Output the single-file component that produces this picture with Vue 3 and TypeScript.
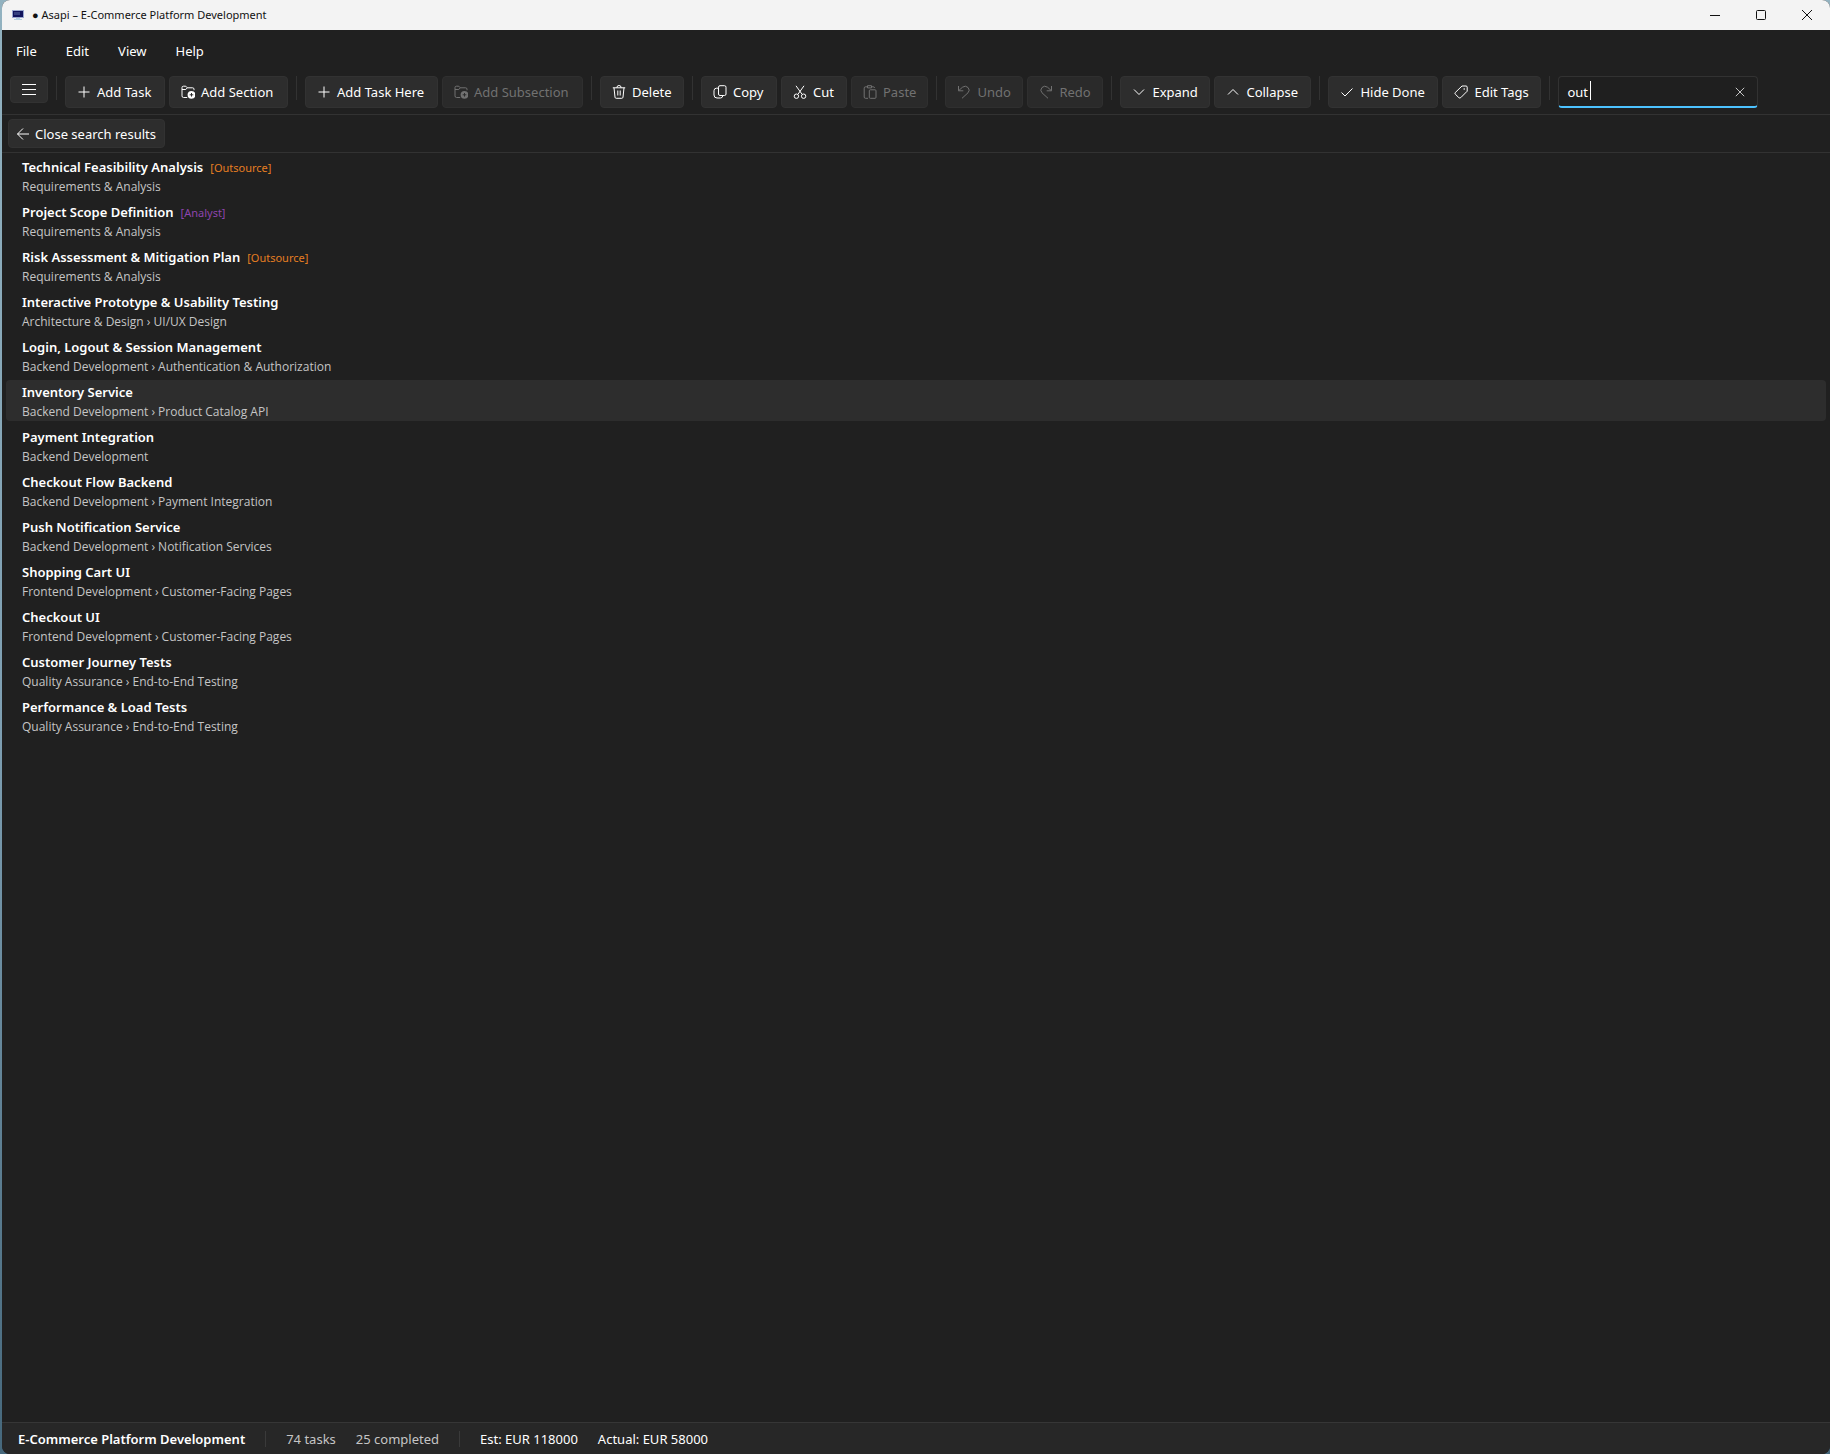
<script setup lang="ts">
import { computed, nextTick, onMounted, ref } from 'vue'

interface Tool { label: string; icon: string; width: number; disabled?: boolean }
interface Result { title: string; path: string; tag?: string; tone?: string }

const icons: Record<string, string> = {
  plus: 'M7 1.5v11M1.5 7h11',
  folder: 'M6.2 12.5H2.6A1.6 1.6 0 0 1 1 10.900V2.600A1.400 1.400 0 0 1 2.400 1.200H4.800L6.300 2.800H11.600A1.400 1.400 0 0 1 13 4.200V5.200M1 4.500H4.800L6.300 2.800',
  trash: 'M.8 2.800H13.200M5 2.800V2.200A2 1.700 0 0 1 9 2.200V2.800M2 2.800L3 12.200Q3.100 13.300 4.200 13.300H9.800Q10.900 13.300 11 12.200L12 2.800M5.800 5.500V10.500M8.200 5.500V10.500',
  copy: 'M5.500 2.200A1.500 1.500 0 0 1 7 .7H11.500A1.500 1.500 0 0 1 13 2.200V9A1.500 1.500 0 0 1 11.500 10.500H7A1.500 1.500 0 0 1 5.500 9ZM5.500 3.200H3.500Q1 3.200 1 5.700V10Q1 13 4 13H7.500Q9.500 13 9.800 10.800',
  cut: 'M3 .8L9 9.200M11 .8L5 9.200M5.600 11.200a2.200 2.200 0 1 1-4.400 0a2.200 2.200 0 1 1 4.400 0M12.800 11.200a2.200 2.200 0 1 1-4.400 0a2.200 2.200 0 1 1 4.400 0',
  paste: 'M4 1.800H2.500A1.300 1.300 0 0 0 1.200 3.100V12A1.300 1.300 0 0 0 2.500 13.300H5M4.500 .7H8.500V2.900H4.500ZM9 1.800H10.300Q11.500 1.800 11.500 3M6.300 5.800A1 1 0 0 1 7.300 4.800H12A1 1 0 0 1 13 5.800V12.300A1 1 0 0 1 12 13.300H7.300A1 1 0 0 1 6.300 12.300Z',
  undo: 'M1.500 1V5.800H6.300M1.800 5.500L5.500 2.200Q8.500 0 11 2.500Q13.500 5.200 11 7.800L5 13.300',
  redo: 'M12.500 1V5.800H7.700M12.200 5.500L8.500 2.200Q5.500 0 3 2.500Q.5 5.200 3 7.800L9 13.300',
  down: 'M2 4.500L7 9.500L12 4.500',
  up: 'M2 9.500L7 4.500L12 9.500',
  check: 'M1.500 7.500L5 11L12.500 3.500',
  tag: 'M8 1H12Q13.200 1 13.200 2.200V6.200L6.800 12.600Q5.800 13.500 4.800 12.600L1.300 9.200Q.5 8.300 1.300 7.500ZM10.200 3.500v1M9.700 4h1',
}

const groups: Tool[][] = [
  [{ label: 'Add Task', icon: 'plus', width: 100 }, { label: 'Add Section', icon: 'folder', width: 119 }],
  [{ label: 'Add Task Here', icon: 'plus', width: 133 }, { label: 'Add Subsection', icon: 'folder', width: 141, disabled: true }],
  [{ label: 'Delete', icon: 'trash', width: 84 }],
  [
    { label: 'Copy', icon: 'copy', width: 76 },
    { label: 'Cut', icon: 'cut', width: 66 },
    { label: 'Paste', icon: 'paste', width: 77, disabled: true },
  ],
  [{ label: 'Undo', icon: 'undo', width: 78, disabled: true }, { label: 'Redo', icon: 'redo', width: 76, disabled: true }],
  [{ label: 'Expand', icon: 'down', width: 90 }, { label: 'Collapse', icon: 'up', width: 97 }],
  [{ label: 'Hide Done', icon: 'check', width: 110 }, { label: 'Edit Tags', icon: 'tag', width: 99 }],
]

const results: Result[] = [
  { title: 'Technical Feasibility Analysis', path: 'Requirements & Analysis', tag: '[Outsource]', tone: 'orange' },
  { title: 'Project Scope Definition', path: 'Requirements & Analysis', tag: '[Analyst]', tone: 'purple' },
  { title: 'Risk Assessment & Mitigation Plan', path: 'Requirements & Analysis', tag: '[Outsource]', tone: 'orange' },
  { title: 'Interactive Prototype & Usability Testing', path: 'Architecture & Design › UI/UX Design' },
  { title: 'Login, Logout & Session Management', path: 'Backend Development › Authentication & Authorization' },
  { title: 'Inventory Service', path: 'Backend Development › Product Catalog API' },
  { title: 'Payment Integration', path: 'Backend Development' },
  { title: 'Checkout Flow Backend', path: 'Backend Development › Payment Integration' },
  { title: 'Push Notification Service', path: 'Backend Development › Notification Services' },
  { title: 'Shopping Cart UI', path: 'Frontend Development › Customer-Facing Pages' },
  { title: 'Checkout UI', path: 'Frontend Development › Customer-Facing Pages' },
  { title: 'Customer Journey Tests', path: 'Quality Assurance › End-to-End Testing' },
  { title: 'Performance & Load Tests', path: 'Quality Assurance › End-to-End Testing' },
]

const query = ref('out')
const highlighted = ref(5)
const searchBox = ref<HTMLInputElement | null>(null)
const caretLeft = computed(() => `calc(8px + ${query.value.length}ch)`)

onMounted(async () => {
  await nextTick()
  searchBox.value?.focus()
})
</script>

<template>
  <div class="desktop">
    <div class="window">
      <header class="titlebar">
        <svg class="app-icon" width="12" height="12" viewBox="0 0 12 12" aria-hidden="true">
          <rect x="0" y="1" width="12" height="8" fill="#9aa8d0" />
          <rect x="1" y="2" width="10" height="6" fill="#11145c" />
          <rect x="2" y="3" width="6" height="3" fill="#34407f" />
          <path d="M4 9h4v1h2v1H2v-1h2z" fill="#b4cfe0" />
        </svg>
        <span class="caption">● Asapi – E-Commerce Platform Development</span>
        <button class="win-btn" aria-label="Minimize"><svg width="12" height="12" viewBox="0 0 12 12"><path d="M1 6.500H11" /></svg></button>
        <button class="win-btn" aria-label="Maximize"><svg width="12" height="12" viewBox="0 0 12 12"><rect x="1.500" y="1.500" width="9" height="9" rx="1" /></svg></button>
        <button class="win-btn" aria-label="Close"><svg width="12" height="12" viewBox="0 0 12 12"><path d="M1 1L11 11M11 1L1 11" /></svg></button>
      </header>

      <nav class="menubar">
        <button v-for="m in ['File', 'Edit', 'View', 'Help']" :key="m">{{ m }}</button>
      </nav>

      <div class="toolbar">
        <button class="tool burger" aria-label="Menu">
          <svg width="14" height="14" viewBox="0 0 14 14"><path d="M0 1.500H14M0 6.500H14M0 11.500H14" /></svg>
        </button>
        <template v-for="(group, g) in groups" :key="g">
          <span class="rule"></span>
          <div class="group">
            <button v-for="t in group" :key="t.label" class="tool" :disabled="t.disabled" :style="{ minWidth: t.width + 'px' }">
              <svg width="14" height="14" viewBox="0 0 14 14" aria-hidden="true">
                <path :d="icons[t.icon]" />
                <template v-if="t.icon === 'folder'">
                  <circle class="badge" cx="10.500" cy="9.800" r="3.900" />
                  <path class="badge-plus" d="M10.500 8v3.600M8.700 9.800h3.600" />
                </template>
              </svg>
              {{ t.label }}
            </button>
          </div>
        </template>
        <span class="rule"></span>
        <div class="search">
          <input ref="searchBox" v-model="query" type="text" aria-label="Search tasks" spellcheck="false" />
          <span class="caret" :style="{ left: caretLeft }"></span>
          <button class="clear" aria-label="Clear search" @click="query = ''">
            <svg width="10" height="10" viewBox="0 0 10 10"><path d="M.8 .8L9.200 9.200M9.200 .8L.8 9.200" /></svg>
          </button>
        </div>
      </div>

      <div class="backbar">
        <button class="tool back">
          <svg width="14" height="14" viewBox="0 0 14 14" aria-hidden="true"><path d="M7 1.500L1.500 7L7 12.500M1.500 7H13" /></svg>
          Close search results
        </button>
      </div>

      <ul class="results">
        <li v-for="(r, i) in results" :key="r.title" :class="{ active: i === highlighted }">
          <div class="heading">
            <span class="title">{{ r.title }}</span>
            <span v-if="r.tag" class="tag" :class="r.tone">{{ r.tag }}</span>
          </div>
          <div class="path">{{ r.path }}</div>
        </li>
      </ul>

      <footer class="status">
        <strong>E-Commerce Platform Development</strong>
        <span class="mark"></span>
        <span class="dim">74 tasks</span>
        <span class="dim">25 completed</span>
        <span class="mark"></span>
        <span>Est: EUR 118000</span>
        <span>Actual: EUR 58000</span>
      </footer>
    </div>
  </div>
</template>

<style>
body {
  margin: 0;
}
</style>

<style scoped>
* {
  box-sizing: border-box;
}
.desktop {
  min-height: 100vh;
  padding-left: 2px;
  display: flex;
  background: linear-gradient(#92b2c0, #7e9fb2 50%, #46687c);
  font: 13px/20px "Segoe UI", "Noto Sans", sans-serif;
  color: #fff;
}
.window {
  flex: 1;
  min-width: 0;
  display: flex;
  flex-direction: column;
  border-radius: 8px;
  overflow: hidden;
  background: #202020;
}
button {
  font: inherit;
  color: inherit;
  background: none;
  border: 0;
  padding: 0;
}
svg {
  flex: none;
  fill: none;
  stroke: currentColor;
  stroke-width: 1;
}
.titlebar {
  height: 30px;
  display: flex;
  align-items: center;
  padding-left: 10px;
  background: #f3f3f3;
  color: #111;
  font-size: 11px;
}
.app-icon {
  stroke: none;
  margin-right: 8px;
}
.caption {
  flex: 1;
}
.win-btn {
  width: 46px;
  height: 30px;
  display: flex;
  align-items: center;
  justify-content: center;
}
.menubar {
  height: 46px;
  display: flex;
  align-items: center;
  padding: 0 0 4px 14px;
  gap: 29px;
}
.toolbar {
  height: 39px;
  display: flex;
  align-items: flex-start;
  gap: 8px;
  padding-left: 8px;
  border-bottom: 1px solid #323232;
}
.group {
  display: flex;
  gap: 4px;
}
.rule {
  width: 1px;
  height: 24px;
  background: #323232;
}
.tool {
  height: 32px;
  display: flex;
  align-items: center;
  gap: 6px;
  padding: 0 11px;
  border: 1px solid #323232;
  border-radius: 4px;
  background: #2d2d2d;
  white-space: nowrap;
}
.tool:disabled {
  color: #717171;
  background: #2a2a2a;
  border-color: #2f2f2f;
}
.burger {
  height: 27px;
}
.badge {
  fill: currentColor;
  stroke: none;
}
.badge-plus {
  stroke: #2d2d2d;
}
.search {
  position: relative;
  display: flex;
  align-items: center;
  width: 200px;
  height: 32px;
  padding: 0 12px 0 8px;
  border: 1px solid #323232;
  border-bottom: 2px solid #4cc2ff;
  border-radius: 4px;
  background: #1f1f1f;
}
.search input {
  flex: 1;
  min-width: 0;
  padding: 0;
  border: 0;
  outline: 0;
  background: none;
  color: #fff;
  caret-color: transparent;
  font: inherit;
}
.caret {
  position: absolute;
  top: 4px;
  width: 1px;
  height: 19px;
  background: #fff;
}
.clear {
  display: flex;
  color: #c5c5c5;
}
.backbar {
  height: 38px;
  padding: 4px 0 0 6px;
  border-bottom: 1px solid #323232;
}
.back {
  height: 29px;
  gap: 5px;
  padding: 0 8px 0 7px;
}
.results {
  flex: 1;
  margin: 0;
  padding: 2px 4px;
  list-style: none;
}
.results li {
  height: 41px;
  margin-bottom: 4px;
  padding: 2px 16px;
  border-radius: 4px;
}
.results li.active {
  background: #2d2d2d;
}
.heading {
  height: 20px;
  display: flex;
  align-items: baseline;
  gap: 7px;
}
.title,
.status strong {
  font-weight: 600;
}
.tag {
  font-size: 11px;
}
.path {
  font-family: "Segoe UI", "Open Sans", sans-serif;
  font-size: 12px;
  line-height: 20px;
  color: #c5c5c5;
}
.orange {
  color: #e67e22;
}
.purple {
  color: #8e44ad;
}
.status {
  height: 32px;
  display: flex;
  align-items: center;
  gap: 20px;
  padding: 0 16px;
  border-top: 1px solid #363636;
  background: #272727;
}
.mark {
  width: 1px;
  height: 16px;
  background: #3a3a3a;
}
.dim {
  color: #c5c5c5;
}
</style>
